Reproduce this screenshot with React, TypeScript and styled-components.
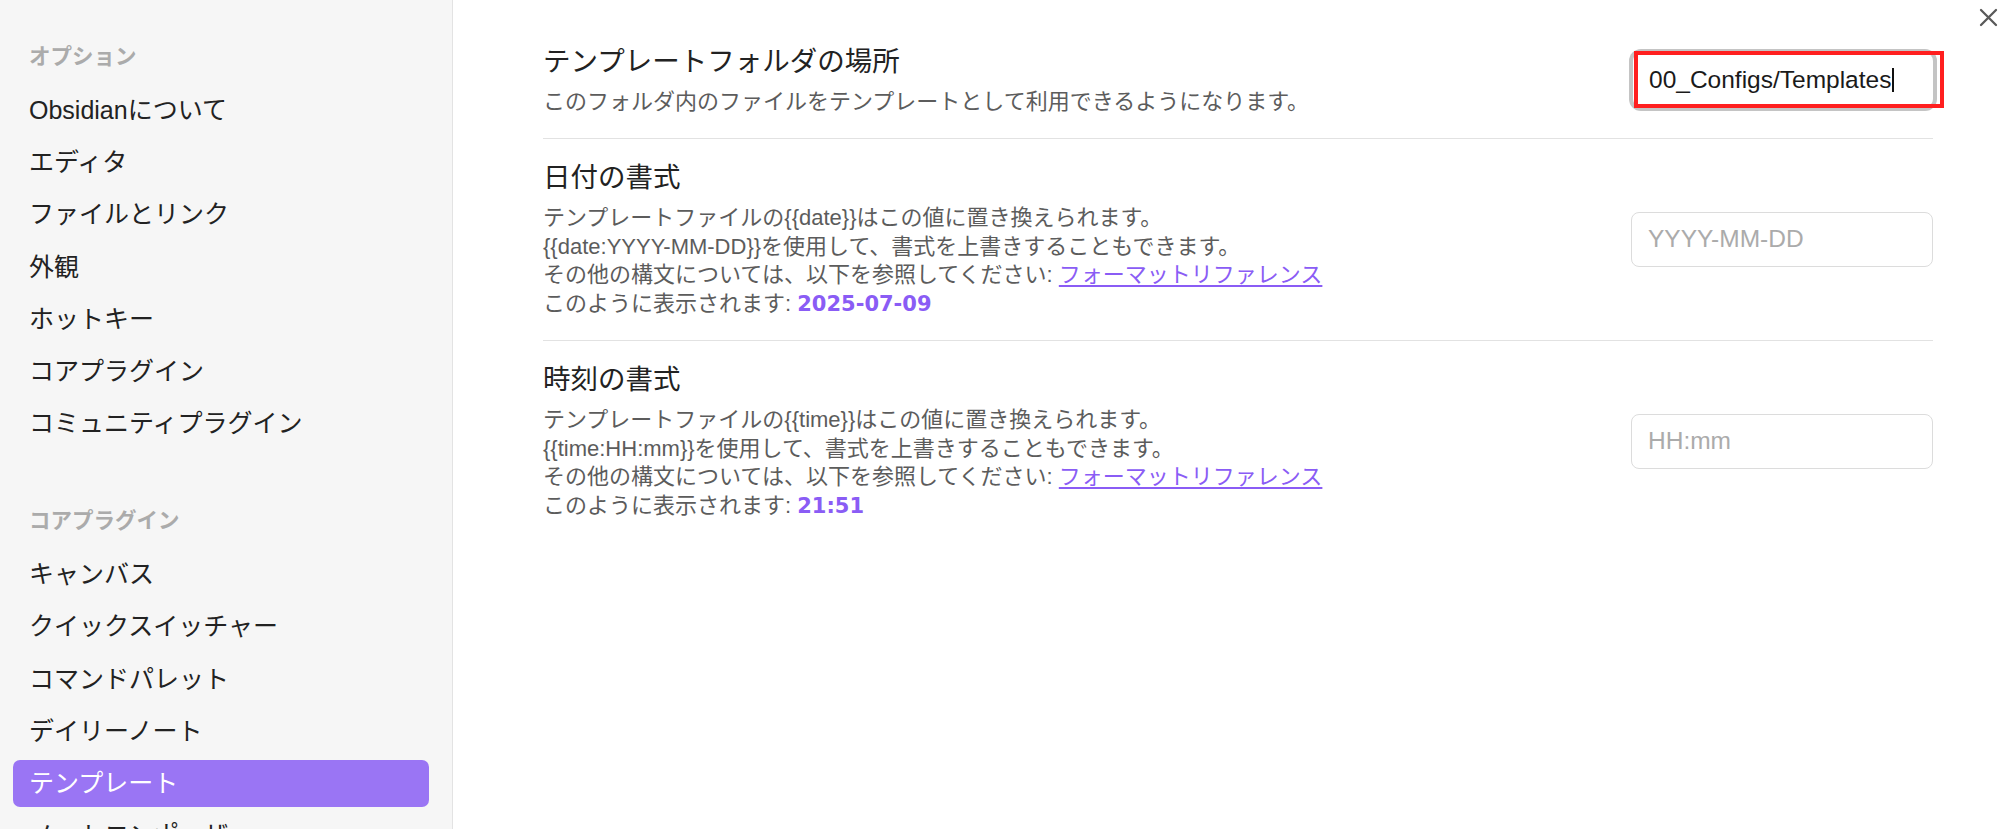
import React from "react";
import styled, { createGlobalStyle } from "styled-components";

const GlobalStyle = createGlobalStyle`
  html, body {
    margin: 0;
    padding: 0;
    height: 100%;
    overflow: hidden;
    background: #ffffff;
  }
  #root { height: 100%; }
  *, *::before, *::after { box-sizing: border-box; }
  body {
    font-family: "Liberation Sans", "Noto Sans CJK JP", sans-serif;
    -webkit-font-smoothing: antialiased;
  }
`;

const Layout = styled.div`
  display: flex;
  width: 2000px;
  height: 829px;
  overflow: hidden;
`;

const Sidebar = styled.nav`
  width: 453px;
  flex-shrink: 0;
  background: #f6f6f6;
  border-right: 1px solid #e3e3e3;
  padding: 42px 23px 0 13px;
  display: flex;
  flex-direction: column;
  overflow: hidden;
`;

const NavGroup = styled.section`
  display: flex;
  flex-direction: column;
  & + & {
    margin-top: 59px;
  }
`;

const NavHeader = styled.div`
  height: 30px;
  line-height: 30px;
  padding-left: 16px;
  margin-bottom: 15px;
  font-size: 21.5px;
  font-weight: 700;
  color: #ababab;
  white-space: nowrap;
`;

const NavList = styled.ul`
  list-style: none;
  margin: 0;
  padding: 0;
  display: flex;
  flex-direction: column;
  gap: 5.2px;
`;

const NavItem = styled.li<{ $active?: boolean }>`
  flex-shrink: 0;
  height: 47px;
  line-height: 47px;
  padding-left: 16px;
  border-radius: 7px;
  font-size: 25px;
  white-space: nowrap;
  color: ${(p) => (p.$active ? "#ffffff" : "#222222")};
  background: ${(p) => (p.$active ? "#9a75f4" : "transparent")};
`;

const Main = styled.main`
  flex: 1;
  position: relative;
  padding: 22px 67px 0 90px;
  overflow: hidden;
`;

const CloseButton = styled.button`
  position: absolute;
  top: 8px;
  right: 2px;
  width: 19px;
  height: 19px;
  padding: 0;
  border: 0;
  background: none;
  display: flex;
  align-items: center;
  justify-content: center;
  cursor: pointer;
`;

const SettingItem = styled.div`
  display: flex;
  align-items: center;
  padding: 21.5px 0;
  & + & {
    border-top: 1px solid #e2e2e2;
  }
`;

const Info = styled.div`
  flex: 1;
  min-width: 0;
  display: flex;
  flex-direction: column;
  gap: 8px;
`;

const Name = styled.div`
  font-size: 27.5px;
  line-height: 36px;
  color: #222222;
  white-space: nowrap;
`;

const Desc = styled.div`
  font-size: 22px;
  line-height: 28.5px;
  color: #5c5c5c;
  white-space: nowrap;
`;

const RefLink = styled.a`
  color: #8a5cf5;
  text-decoration: underline;
  text-underline-offset: 3px;
`;

const Value = styled.span`
  font-family: "DejaVu Sans", "Liberation Sans", sans-serif;
  font-size: 21px;
  color: #8a5cf5;
  font-weight: 700;
`;

const Control = styled.div`
  flex-shrink: 0;
  display: flex;
  align-items: center;
`;

const TextInput = styled.input`
  width: 302px;
  height: 55px;
  border: 1px solid #dcdcdc;
  border-radius: 8px;
  padding: 0 16px;
  font-family: "Liberation Sans", "Noto Sans CJK JP", sans-serif;
  font-size: 24.5px;
  color: #222222;
  background: #ffffff;
  outline: none;
  &::placeholder {
    color: #ababab;
  }
`;

const FocusedField = styled.div`
  position: relative;
  width: 300px;
  height: 54px;
  border-radius: 8px;
  background: #ffffff;
  box-shadow: 0 0 0 4px #c4c4c4;
  padding: 0 16px;
  display: flex;
  align-items: center;
  font-size: 24.5px;
  color: #1a1a1a;
  white-space: nowrap;
`;

const Caret = styled.span`
  display: inline-block;
  width: 1.5px;
  height: 24px;
  margin-left: 1px;
  background: #111111;
`;

const Annotation = styled.span`
  position: absolute;
  left: 1px;
  top: -2px;
  width: 310px;
  height: 57px;
  border: 4px solid #ff1f1f;
  pointer-events: none;
`;

const groups = [
  {
    title: "オプション",
    items: [
      "Obsidianについて",
      "エディタ",
      "ファイルとリンク",
      "外観",
      "ホットキー",
      "コアプラグイン",
      "コミュニティプラグイン",
    ],
  },
  {
    title: "コアプラグイン",
    items: [
      "キャンバス",
      "クイックスイッチャー",
      "コマンドパレット",
      "デイリーノート",
      "テンプレート",
      "ノートコンポーザー",
    ],
  },
];

export default function App() {
  return (
    <>
      <GlobalStyle />
      <Layout>
        <Sidebar>
          {groups.map((g) => (
            <NavGroup key={g.title}>
              <NavHeader>{g.title}</NavHeader>
              <NavList>
                {g.items.map((it) => (
                  <NavItem key={it} $active={it === "テンプレート"}>
                    {it}
                  </NavItem>
                ))}
              </NavList>
            </NavGroup>
          ))}
        </Sidebar>
        <Main>
          <CloseButton aria-label="閉じる">
            <svg width="19" height="19" viewBox="0 0 19 19">
              <path
                d="M2 2 L17 17 M17 2 L2 17"
                stroke="#5a5a5a"
                strokeWidth="2.3"
                strokeLinecap="round"
              />
            </svg>
          </CloseButton>

          <SettingItem>
            <Info>
              <Name>テンプレートフォルダの場所</Name>
              <Desc>このフォルダ内のファイルをテンプレートとして利用できるようになります。</Desc>
            </Info>
            <Control>
              <FocusedField>
                00_Configs/Templates
                <Caret />
                <Annotation />
              </FocusedField>
            </Control>
          </SettingItem>

          <SettingItem>
            <Info>
              <Name>日付の書式</Name>
              <Desc>
                テンプレートファイルの{"{{date}}"}はこの値に置き換えられます。
                <br />
                {"{{date:YYYY-MM-DD}}"}を使用して、書式を上書きすることもできます。
                <br />
                その他の構文については、以下を参照してください: <RefLink href="#">フォーマットリファレンス</RefLink>
                <br />
                このように表示されます: <Value>2025-07-09</Value>
              </Desc>
            </Info>
            <Control>
              <TextInput placeholder="YYYY-MM-DD" />
            </Control>
          </SettingItem>

          <SettingItem>
            <Info>
              <Name>時刻の書式</Name>
              <Desc>
                テンプレートファイルの{"{{time}}"}はこの値に置き換えられます。
                <br />
                {"{{time:HH:mm}}"}を使用して、書式を上書きすることもできます。
                <br />
                その他の構文については、以下を参照してください: <RefLink href="#">フォーマットリファレンス</RefLink>
                <br />
                このように表示されます: <Value>21:51</Value>
              </Desc>
            </Info>
            <Control>
              <TextInput placeholder="HH:mm" />
            </Control>
          </SettingItem>
        </Main>
      </Layout>
    </>
  );
}
